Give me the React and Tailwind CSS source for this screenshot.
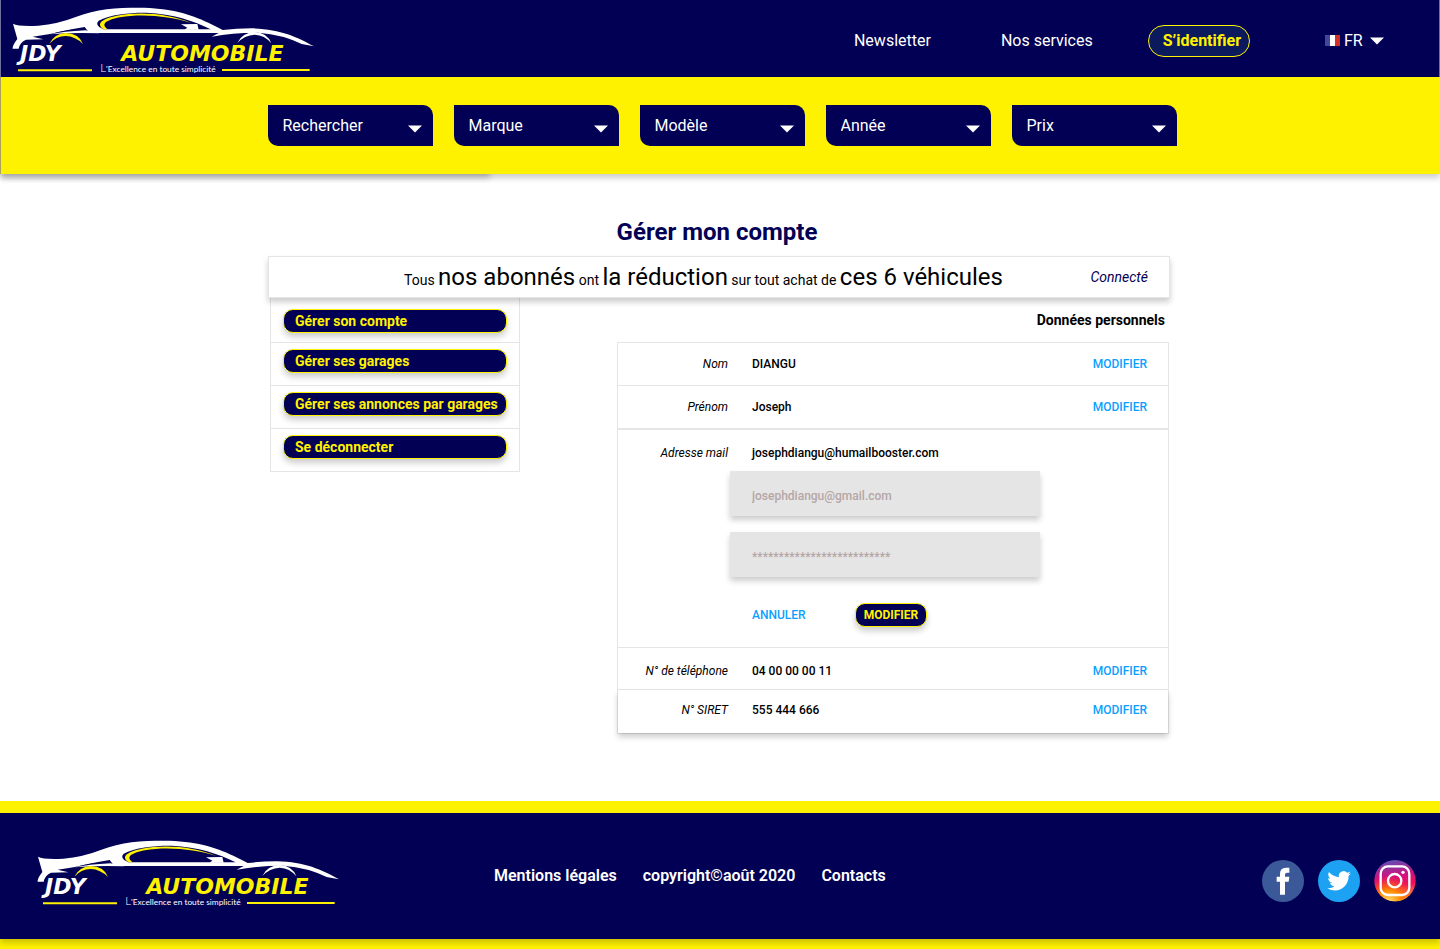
import React from "react";

function Logo() {
  return (
    <svg className="h-[77px] w-[330px] shrink-0" viewBox="0 0 990 231" role="img" aria-label="JDY Automobile">
      <path
        d="M39 71 Q55 80 115 77 Q175 72 225 52 C290 26 350 23 415 23 C510 23 570 42 625 68 Q650 80 668 90 Q710 85 755 85 C840 87 890 110 942 139 L905 132 Q850 104 775 98 Q700 98 635 110 L656 99 L268 99 L254 81 Q190 92 150 102 L98 110 L130 118 L78 119 Q60 126 56 146 L38 146 Q36 138 52 117 Z"
        fill="#fff"
      />
      <path d="M165 98 Q210 88 252 86 L262 96 L200 97 Z" fill="#020055" />
      <path d="M150 103 Q190 94 256 91 L300 100 Q220 97 150 103 Z" fill="#fff" />
      <path d="M310 88 Q282 76 296 62 C330 42 400 37 440 38 C520 42 580 62 632 88 Z" fill="#020055" />
      <path d="M543 73 L592 72 L596 89 L553 89 L562 83 Z" fill="#fff" />
      <path d="M312 88 C286 72 304 57 350 47 C420 33 510 41 574 69 C510 48 425 40 360 52 C314 61 302 74 324 88 Z" fill="#fff200" />
      <path d="M148 131 Q165 100 197 99 Q237 100 249 132 Q226 109 197 108 Q168 109 148 131 Z" fill="#fff200" />
      <path d="M712 129 Q726 98 764 96 Q802 98 814 130 Q794 105 764 104 Q734 105 712 129 Z" fill="#fff" />
      <g fontFamily="'DejaVu Sans', sans-serif" fontWeight="700" fontStyle="italic" fontSize="66">
        <text x="60" y="183" fill="#fff">JDY</text>
        <text x="364" y="183" fill="#fff200">AUTOMOBILE</text>
      </g>
      <path d="M54 211H276M666 210H929" stroke="#fff200" strokeWidth="6" />
      <text x="301" y="215" fill="#fff" fontFamily="Lato, sans-serif" fontSize="25">
        <tspan fontSize="34" fontWeight="300">L</tspan>'Excellence en toute simplicité
      </text>
    </svg>
  );
}

function Caret({ className = "" }) {
  return (
    <svg className={"pointer-events-none h-2 w-[14px] " + className} viewBox="0 0 14 8" aria-hidden="true">
      <path d="M0 0.5H14L7 7.5Z" fill="#fff" />
    </svg>
  );
}

function Filter({ label }) {
  return (
    <div className="relative min-w-0 flex-1">
      <select
        aria-label={label}
        className="h-[41px] w-full appearance-none rounded-tr-[10px] rounded-bl-[10px] bg-[#020055] px-[15px] text-base text-white"
      >
        <option>{label}</option>
      </select>
      <Caret className="absolute top-5 right-[11px]" />
    </div>
  );
}

const CARD_SHADOW = "shadow-[0_4px_6px_rgba(0,0,0,0.2)]";

function SideItem({ children, first }) {
  return (
    <li className={"border-b border-[#e5e5e5] px-3 " + (first ? "h-[45px] pt-[11px]" : "h-[43px] pt-[6px]")}>
      <button
        type="button"
        className={"flex h-6 w-full items-center rounded-[10px] border border-[#fff200] bg-[#020055] pl-[11px] text-left text-sm font-bold whitespace-nowrap text-[#fff200] " + CARD_SHADOW}
      >
        {children}
      </button>
    </li>
  );
}

function Row({ label, value, className = "" }) {
  return (
    <div className={"flex items-center border-[#e5e5e5] pr-[21px] text-xs " + className}>
      <span className="w-[110px] text-right italic">{label}</span>
      <span className="ml-6 font-medium">{value}</span>
      <button type="button" aria-label={"Modifier " + label} className="ml-auto font-medium text-[#0b9fff]">
        MODIFIER
      </button>
    </div>
  );
}

const FIELD =
  "block h-[45px] w-[310px] max-w-full bg-[#e5e5e5] pt-1 pl-[22px] text-xs font-medium placeholder:text-[#b5a6a6] " + CARD_SHADOW;

function SocialLinks() {
  return (
    <div className="mt-[10px] ml-auto flex gap-[14px]">
      <a href="#facebook" aria-label="Facebook">
        <svg className="size-[42px]" viewBox="0 0 126 126">
          <circle cx="63" cy="63" r="63" fill="#3b5998" />
          <path d="M54 104V65H44V50H54V41Q54 23 72 23H82V38H75Q69 38 69 44V50H82L80 65H69V104Z" fill="#fff" />
        </svg>
      </a>
      <a href="#twitter" aria-label="Twitter">
        <svg className="size-[42px]" viewBox="0 0 126 126">
          <circle cx="63" cy="63" r="63" fill="#1da1f2" />
          <path
            transform="translate(28 27) scale(2.95)"
            fill="#fff"
            d="M23.95 4.57a10 10 0 0 1-2.82.77 4.96 4.96 0 0 0 2.16-2.72c-.95.56-2 .96-3.13 1.18a4.92 4.92 0 0 0-8.38 4.48C7.69 8.1 4.07 6.13 1.64 3.16a4.82 4.82 0 0 0-.67 2.48c0 1.71.87 3.21 2.19 4.1a4.9 4.9 0 0 1-2.23-.62v.06a4.92 4.92 0 0 0 3.95 4.83 5 5 0 0 1-2.21.08 4.94 4.94 0 0 0 4.6 3.42A9.87 9.87 0 0 1 0 19.54a13.99 13.99 0 0 0 7.55 2.21c9.05 0 14-7.5 14-13.98 0-.21 0-.42-.02-.63a9.94 9.94 0 0 0 2.46-2.55z"
          />
        </svg>
      </a>
      <a href="#instagram" aria-label="Instagram">
        <svg className="size-[42px]" viewBox="0 0 126 126">
          <defs>
            <linearGradient id="ig-base" x1="0.3" y1="0" x2="0.45" y2="1">
              <stop offset="0" stopColor="#5b51b8" />
              <stop offset="0.4" stopColor="#d0107f" />
              <stop offset="0.65" stopColor="#f2105c" />
              <stop offset="1" stopColor="#ffb03a" />
            </linearGradient>
            <radialGradient id="ig-glow" cx="0.35" cy="1.02" r="0.65">
              <stop offset="0" stopColor="#ffe070" />
              <stop offset="0.45" stopColor="#ff8a00" />
              <stop offset="1" stopColor="#ff3a20" stopOpacity="0" />
            </radialGradient>
          </defs>
          <circle cx="63" cy="62" r="62" fill="url(#ig-base)" />
          <circle cx="63" cy="62" r="62" fill="url(#ig-glow)" />
          <rect x="20" y="19" width="86" height="86" rx="22" fill="none" stroke="#fff" strokeWidth="7" />
          <circle cx="62" cy="62" r="20" fill="none" stroke="#fff" strokeWidth="7" />
          <circle cx="87" cy="37" r="5" fill="#fff" />
        </svg>
      </a>
    </div>
  );
}

export default function App() {
  return (
    <div className="flex min-h-screen flex-col bg-white font-[Roboto,sans-serif] text-black">
      <header className="relative z-10">
        <div className="flex h-[77px] items-center border-x border-[#6f6f9c] bg-[#020055] pr-[55px] text-base text-white">
          <a href="#accueil" className="-ml-px">
            <Logo />
          </a>
          <nav className="ml-auto flex items-center pt-1">
            <a href="#newsletter">Newsletter</a>
            <a href="#services" className="ml-[70px]">Nos services</a>
            <button
              type="button"
              className="ml-[55px] h-8 rounded-full border border-[#fff200] bg-[#0a1a5c] pr-2 pl-[14px] font-bold text-[#fff200]"
            >
              S’identifier
            </button>
            <div className="relative ml-[75px] flex items-center">
              <svg className="h-[11px] w-[15px]" viewBox="0 0 15 11" aria-hidden="true">
                <path d="M0 0H5V11H0Z" fill="#41479b" />
                <path d="M5 0H10V11H5Z" fill="#fff" />
                <path d="M10 0H15V11H10Z" fill="#d32f27" />
              </svg>
              <select aria-label="Langue" className="w-[44px] appearance-none bg-transparent pl-1">
                <option>FR</option>
              </select>
              <Caret className="absolute right-0" />
            </div>
          </nav>
        </div>
        <div className={"relative border-l border-[#a8a25a] bg-[#fff200] pt-7 pb-7 " + CARD_SHADOW}>
          <div className={"absolute bottom-0 left-0 -z-10 h-10 w-[34%] " + CARD_SHADOW} />
          <div className="mx-auto flex w-full max-w-[914px] gap-[21px] pr-px pl-1">
            <Filter label="Rechercher" />
            <Filter label="Marque" />
            <Filter label="Modèle" />
            <Filter label="Année" />
            <Filter label="Prix" />
          </div>
        </div>
      </header>

      <main className="mx-auto w-full max-w-[904px] flex-1 pt-[42px] pr-[2px] pb-[67px]">
        <h1 className="pr-1 text-center text-2xl leading-8 font-bold text-[#020055]">Gérer mon compte</h1>
        <div
          className={"relative mt-2 flex h-[42px] items-center justify-between border border-[#e5e5e5] bg-white pr-[21px] pl-[135px] " + CARD_SHADOW}
        >
          <p className="text-sm whitespace-nowrap">
            Tous <span className="text-2xl">nos abonnés</span> ont <span className="text-2xl">la réduction</span> sur
            tout achat de <span className="text-2xl">ces 6 véhicules</span>
          </p>
          <span className="text-sm text-[#020055] italic">Connecté</span>
        </div>

        <div className="flex items-start justify-between pr-px pl-[2px]">
          <ul className="w-[250px] border-x border-[#e5e5e5]">
            <SideItem first>Gérer son compte</SideItem>
            <SideItem>Gérer ses garages</SideItem>
            <SideItem>Gérer ses annonces par garages</SideItem>
            <SideItem>Se déconnecter</SideItem>
          </ul>

          <section className="w-[552px]">
            <h2 className="pt-3 pr-1 pb-3 text-right text-sm font-bold">Données personnels</h2>
            <div className="border border-[#e5e5e5] bg-white">
              <Row label="Nom" value="DIANGU" className="h-[43px] border-b" />
              <Row label="Prénom" value="Joseph" className="h-11 border-b-2" />
              <form className="h-[218px] border-b border-[#e5e5e5] pt-[15px] text-xs" onSubmit={(e) => e.preventDefault()}>
                <div className="flex">
                  <label htmlFor="email" className="w-[110px] text-right italic">Adresse mail</label>
                  <span className="ml-6 font-medium">josephdiangu@humailbooster.com</span>
                </div>
                <div className="flex flex-col gap-4 pt-[10px] pl-28">
                  <input id="email" type="email" placeholder="josephdiangu@gmail.com" className={FIELD} />
                  <input type="password" aria-label="Mot de passe" placeholder="**************************" className={FIELD} />
                </div>
                <div className="mt-[26px] flex items-center pl-[134px]">
                  <button type="button" className="font-medium text-[#0b9fff]">ANNULER</button>
                  <button
                    type="submit"
                    className={"ml-[49px] h-6 rounded-[10px] border border-[#fff200] bg-[#020055] px-2 font-bold text-[#fff200] " + CARD_SHADOW}
                  >
                    MODIFIER
                  </button>
                </div>
              </form>
              <Row label="N° de téléphone" value="04 00 00 00 11" className="h-[42px] border-b pt-1" />
              <Row label="N° SIRET" value="555 444 666" className={"h-[43px] pb-1 " + CARD_SHADOW} />
            </div>
          </section>
        </div>
      </main>

      <footer className="border-t-[12px] border-b-[10px] border-[#fff200] bg-[#fff200]">
        <div className={"flex h-[126px] items-center bg-[#020055] pr-6 pl-[25px] text-base text-white " + CARD_SHADOW}>
          <a href="#accueil" className="-mt-[9px]">
            <Logo />
          </a>
          <nav className="ml-[139px] flex gap-[26px] font-semibold">
            <a href="#mentions">Mentions légales</a>
            <span>copyright©août 2020</span>
            <a href="#contacts">Contacts</a>
          </nav>
          <SocialLinks />
        </div>
      </footer>
    </div>
  );
}
